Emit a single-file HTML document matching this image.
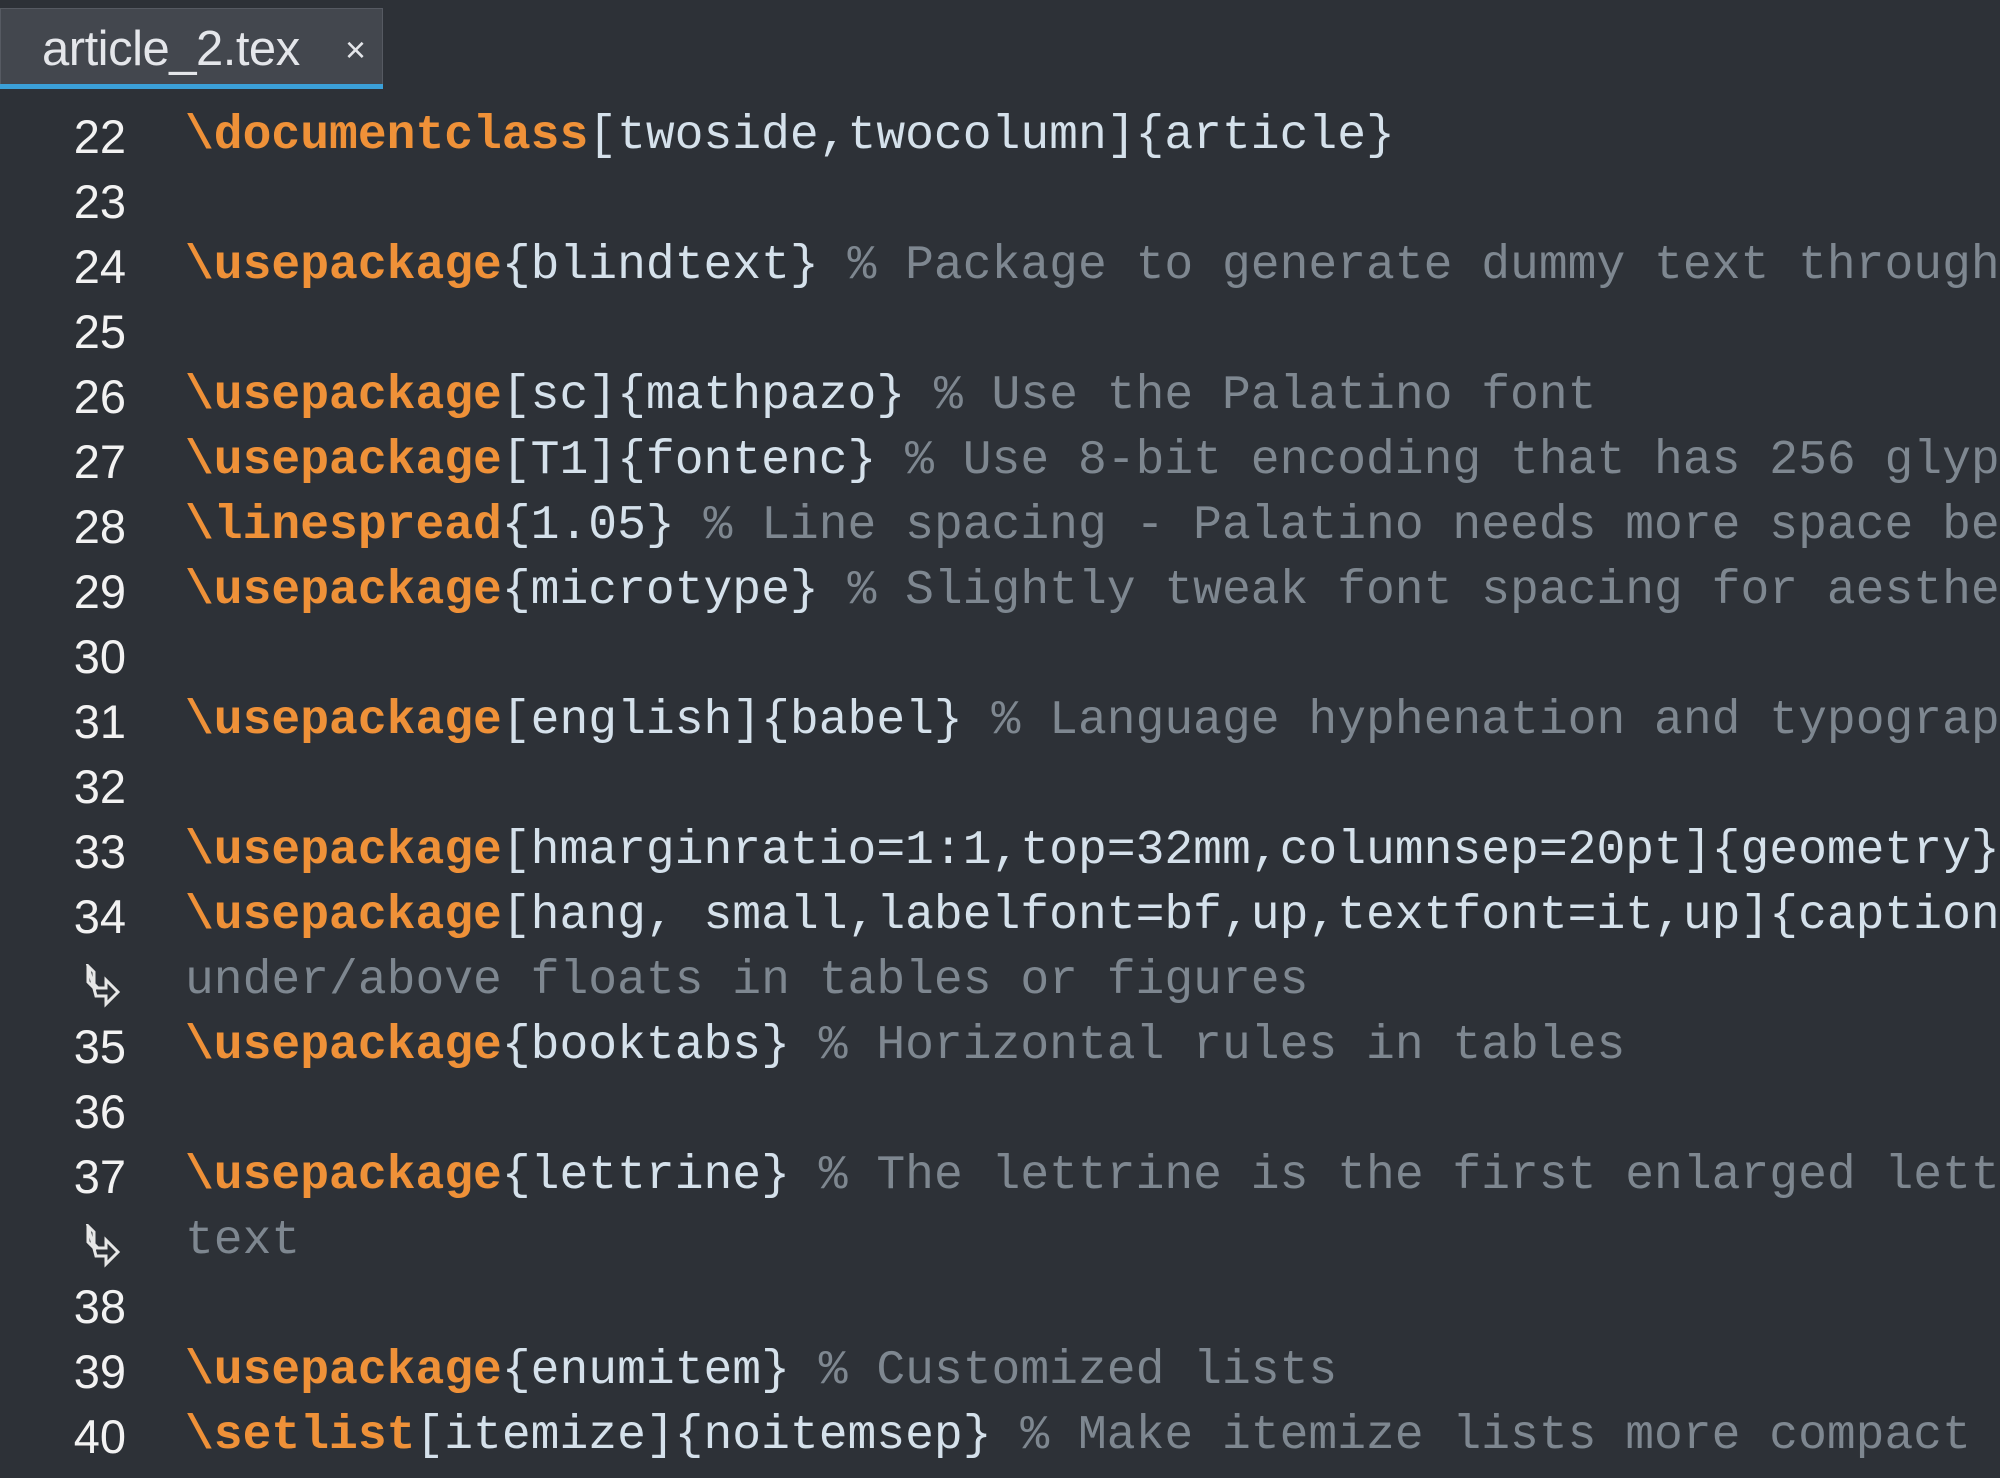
<!DOCTYPE html>
<html><head><meta charset="utf-8"><style>
html,body{margin:0;padding:0;width:2000px;height:1478px;overflow:hidden;background:#2d3137;}
.tab{position:absolute;left:0;top:8px;width:383px;height:78px;background:#43474e;border:1px solid #565a62;border-bottom:none;box-sizing:border-box;}
.tabline{position:absolute;left:0;top:84px;width:383px;height:5px;background:#3ba0d8;}
.tabt{position:absolute;left:41px;top:12px;font:49px "Liberation Sans",sans-serif;color:#e4e6ea;letter-spacing:-0.5px;}
.x{position:absolute;left:344px;top:20px;font:36px "Liberation Sans",sans-serif;color:#e4e6ea;}
.ln{position:absolute;left:0;width:126px;text-align:right;font:47px "Liberation Sans",sans-serif;color:#f2f2f2;line-height:65px;}
.code{position:absolute;left:185px;width:1815px;overflow:hidden;font:48px "Liberation Mono",monospace;color:#d5e1eb;line-height:65px;white-space:pre;}
.k{color:#ef9138;font-weight:bold}
.c{color:#7e8790}
.w{position:absolute;left:84px;}
</style></head><body>
<div class="tab"><div class="tabt">article_2.tex</div><div class="x">×</div></div>
<div class="tabline"></div>
<div style="position:absolute;top:104px;left:0;width:2000px;">
<div class="ln" style="top:0">22</div>
<div class="ln" style="top:65px">23</div>
<div class="ln" style="top:130px">24</div>
<div class="ln" style="top:195px">25</div>
<div class="ln" style="top:260px">26</div>
<div class="ln" style="top:325px">27</div>
<div class="ln" style="top:390px">28</div>
<div class="ln" style="top:455px">29</div>
<div class="ln" style="top:520px">30</div>
<div class="ln" style="top:585px">31</div>
<div class="ln" style="top:650px">32</div>
<div class="ln" style="top:715px">33</div>
<div class="ln" style="top:780px">34</div>
<svg class="w" style="top:860px" width="40" height="44" viewBox="0 0 40 44"><path d="M4 2 V18 L12 26 M4 2 L10 8 V20 L14 24 H22 V16 L34 28 L22 40 V32 H12 Z" fill="none" stroke="#e6e6e6" stroke-width="3"/></svg>
<div class="ln" style="top:910px">35</div>
<div class="ln" style="top:975px">36</div>
<div class="ln" style="top:1040px">37</div>
<svg class="w" style="top:1120px" width="40" height="44" viewBox="0 0 40 44"><path d="M4 2 V18 L12 26 M4 2 L10 8 V20 L14 24 H22 V16 L34 28 L22 40 V32 H12 Z" fill="none" stroke="#e6e6e6" stroke-width="3"/></svg>
<div class="ln" style="top:1170px">38</div>
<div class="ln" style="top:1235px">39</div>
<div class="ln" style="top:1300px">40</div>
<div class="code" style="top:0"><span class="k">\documentclass</span>[twoside,twocolumn]{article}
 
<span class="k">\usepackage</span>{blindtext} <span class="c">% Package to generate dummy text throughout</span>
 
<span class="k">\usepackage</span>[sc]{mathpazo} <span class="c">% Use the Palatino font</span>
<span class="k">\usepackage</span>[T1]{fontenc} <span class="c">% Use 8-bit encoding that has 256 glyphs</span>
<span class="k">\linespread</span>{1.05} <span class="c">% Line spacing - Palatino needs more space between</span>
<span class="k">\usepackage</span>{microtype} <span class="c">% Slightly tweak font spacing for aesthetics</span>
 
<span class="k">\usepackage</span>[english]{babel} <span class="c">% Language hyphenation and typographical</span>
 
<span class="k">\usepackage</span>[hmarginratio=1:1,top=32mm,columnsep=20pt]{geometry}
<span class="k">\usepackage</span>[hang, small,labelfont=bf,up,textfont=it,up]{caption}
<span class="c">under/above floats in tables or figures</span>
<span class="k">\usepackage</span>{booktabs} <span class="c">% Horizontal rules in tables</span>
 
<span class="k">\usepackage</span>{lettrine} <span class="c">% The lettrine is the first enlarged letter</span>
<span class="c">text</span>
 
<span class="k">\usepackage</span>{enumitem} <span class="c">% Customized lists</span>
<span class="k">\setlist</span>[itemize]{noitemsep} <span class="c">% Make itemize lists more compact</span></div>
</div>
</body></html>
